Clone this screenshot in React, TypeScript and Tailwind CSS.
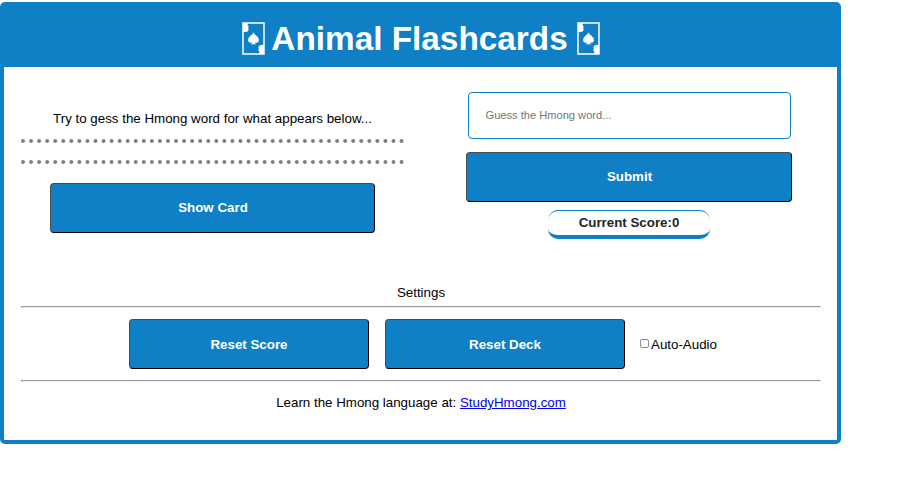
import type { ReactNode } from "react";

function CardIcon() {
  return (
    <svg width="23" height="33" viewBox="0 0 23 33" className="shrink-0">
      <rect x="1" y="1" width="21" height="31" fill="none" stroke="white" strokeWidth="1.5" />
      <path d="M1 1h5l-.5 2.500 1.300 1-.8 1.500.8 1.500-1.300 2-1.500.5L1 10zM22 32h-5l.5-2.500-1.300-1 .8-1.500-.8-1.500 1.300-2 1.500-.5L22 23z" fill="white" />
      <path
        d="M11.500 10.300c.8 2.700 5.400 4.400 5.400 7.600 0 2.600-2.500 3.400-4.200 2.400l1.300 1.900H9l1.300-1.900c-1.700 1-4.200.2-4.200-2.400 0-3.200 4.600-4.900 5.400-7.600z"
        fill="white"
      />
    </svg>
  );
}

function Button({ children, className }: { children: ReactNode; className: string }) {
  return (
    <button
      className={`h-[50px] rounded border border-t-[#4c4c4c] border-r-black border-b-black border-l-[#4c4c4c] bg-[#0f80c5] text-[13.333px] font-bold text-white ${className}`}
    >
      {children}
    </button>
  );
}

function Rule() {
  return <div className="h-0.5 border border-t-[#9a9a9a] border-r-[#eeeeee] border-b-[#eeeeee] border-l-[#9a9a9a]" />;
}

export default function App() {
  return (
    <div className="h-[482px] bg-white pt-0.5 font-['Liberation_Sans',Arial,sans-serif] text-[13.333px] leading-4 text-black">
      <main className="h-[442px] w-[841px] rounded-[5px] border-4 border-[#0f80c5]">
        <header className="flex h-[61px] items-center justify-center bg-[#0f80c5] pt-1 pl-px text-white">
          <CardIcon />
          <h1 className="mr-[9px] ml-1.5 pt-px text-[33.333px] leading-[56px] font-bold whitespace-nowrap">
            Animal Flashcards
          </h1>
          <CardIcon />
        </header>
        <div className="pr-4 pl-[17px]">
          <div className="flex h-[218px] justify-between">
            <section className="flex w-[383px] flex-col items-center pt-[44px]">
              <p className="whitespace-nowrap">Try to gess the Hmong word for what appears below...</p>
              <div className="mt-3 h-[25px] w-full border-y-4 border-dotted border-[#808080]" />
              <Button className="mt-[19px] mr-px w-[325px] pl-0.5">Show Card</Button>
            </section>
            <section className="flex w-96 flex-col items-center pt-[25px]">
              <input
                className="h-[47px] w-[323px] rounded border border-[#0f80c5] px-[17px] pb-0.5 text-[11.111px] placeholder:text-[#757575]"
                placeholder="Guess the Hmong word..."
              />
              <Button className="mt-[13px] w-[326px] pl-px">Submit</Button>
              <div className="mt-2 flex h-[29px] w-[162px] items-center justify-center rounded-[10px] border-t border-b-4 border-[#0f80c5] font-bold text-[#212529]">
                Current Score:0
              </div>
            </section>
          </div>
          <section>
            <p className="pb-[5px] text-center">Settings</p>
            <Rule />
            <div className="flex h-[72px] items-center pl-[108px]">
              <Button className="w-60 pt-0.5">Reset Score</Button>
              <Button className="ml-4 w-60 pt-0.5">Reset Deck</Button>
              <label className="ml-[15px] flex items-center gap-0.5 pt-0.5">
                <input
                  type="checkbox"
                  className="relative -top-[2px] h-[9px] w-[9px] appearance-none rounded-[2px] border border-[#8a8a8a] bg-white"
                />
                Auto-Audio
              </label>
            </div>
            <Rule />
            <p className="pt-[13px] text-center">
              Learn the Hmong language at:{" "}
              <a href="#" className="text-[#0000ee] underline">
                StudyHmong.com
              </a>
            </p>
          </section>
        </div>
      </main>
    </div>
  );
}
